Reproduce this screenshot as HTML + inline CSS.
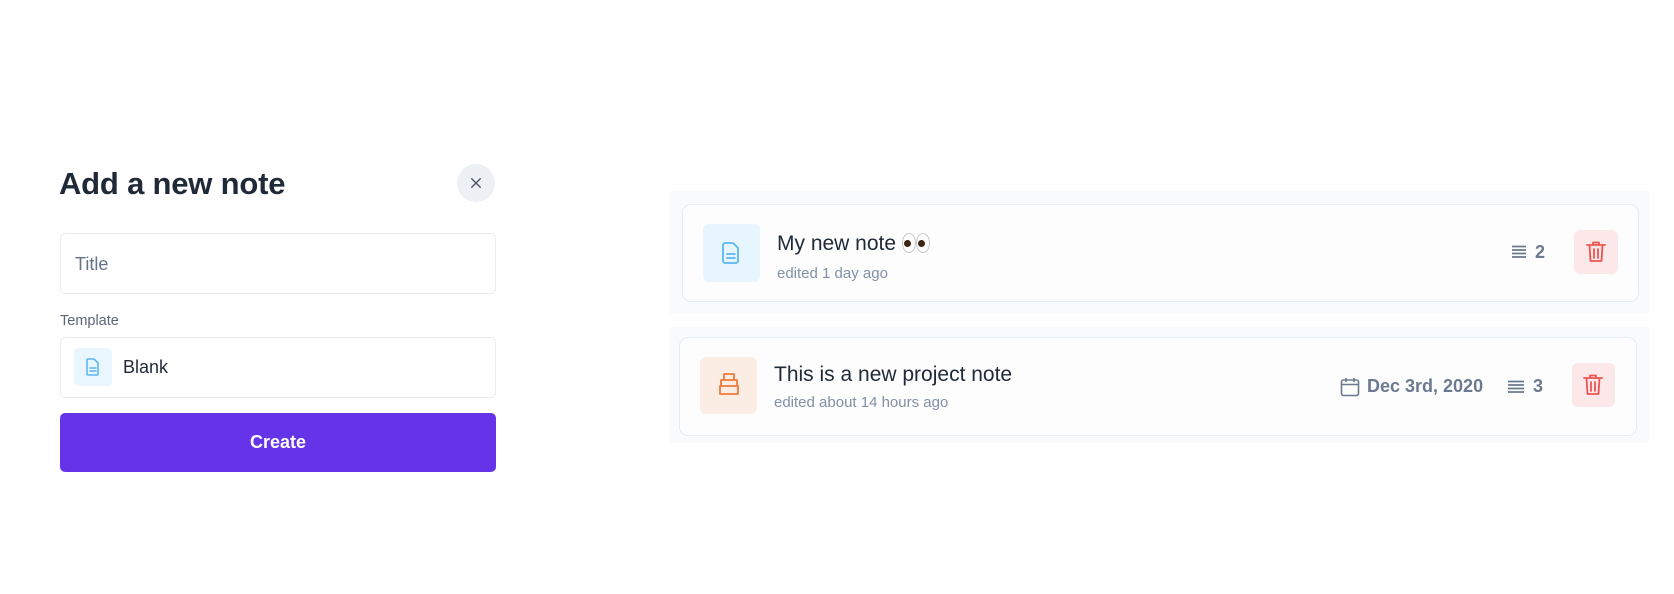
<!DOCTYPE html>
<html><head><meta charset="utf-8"><style>
*{box-sizing:border-box;margin:0;padding:0}
body{width:1674px;height:594px;background:#fff;position:relative;overflow:hidden;font-family:"Liberation Sans","Noto Sans CJK JP",sans-serif;color:#1e2633}
.a{position:absolute}
.t{white-space:nowrap}
</style></head><body>
<div class="a t" style="left:59px;top:166px;font-size:31px;font-weight:bold;color:#1f2937;letter-spacing:-0.2px">Add a new note</div>
<div class="a" style="left:457px;top:164px;width:38px;height:38px;border-radius:50%;background:#edf0f4"></div>
<svg class="a" style="left:470px;top:177px" width="12" height="12" viewBox="0 0 14 14"><path d="M2 2L12 12M12 2L2 12" stroke="#4b5563" stroke-width="1.6" stroke-linecap="round"/></svg>

<div class="a" style="left:60px;top:233px;width:436px;height:61px;border:1px solid #e8ecf1;border-radius:5px"></div>
<div class="a t" style="left:75px;top:254px;font-size:18px;color:#64748b">Title</div>
<div class="a t" style="left:60px;top:313px;font-size:14.5px;color:#5b6677">Template</div>
<div class="a" style="left:60px;top:337px;width:436px;height:61px;border:1px solid #e8ecf1;border-radius:5px"></div>
<div class="a" style="left:74px;top:348px;width:38px;height:38px;border-radius:5px;background:#eaf6fe"></div>
<svg class="a" style="left:84px;top:357px" width="18" height="20" viewBox="0 0 18 20"><path d="M4 2h6l4 4v11a1 1 0 0 1-1 1H4a1 1 0 0 1-1-1V3a1 1 0 0 1 1-1z" fill="none" stroke="#5bb7f0" stroke-width="1.6" stroke-linejoin="round"/><path d="M6 11h6M6 14h6" stroke="#5bb7f0" stroke-width="1.6" stroke-linecap="round"/></svg>
<div class="a t" style="left:123px;top:357px;font-size:18px;color:#1f2937">Blank</div>
<div class="a" style="left:60px;top:413px;width:436px;height:59px;border-radius:5px;background:#6534e8"></div>
<div class="a t" style="left:60px;top:432px;width:436px;text-align:center;font-size:18px;font-weight:bold;color:#fff">Create</div>

<div class="a" style="left:670px;top:191px;width:979px;height:123px;background:#f9fafc"></div>
<div class="a" style="left:682px;top:204px;width:957px;height:98px;border:1px solid #e6eaf1;border-radius:9px;background:#fdfdfe"></div>
<div class="a" style="left:703px;top:224px;width:57px;height:58px;border-radius:6px;background:#e6f5fe"></div>
<svg class="a" style="left:720px;top:241px" width="22" height="24" viewBox="0 0 22 24"><path d="M5 2h8l5 5v13a2 2 0 0 1-2 2H5a2 2 0 0 1-2-2V4a2 2 0 0 1 2-2z" fill="none" stroke="#5bb7f0" stroke-width="1.8" stroke-linejoin="round"/><path d="M7 13h8M7 17h8" stroke="#5bb7f0" stroke-width="1.8" stroke-linecap="round"/></svg>
<div class="a t" style="left:777px;top:232px;font-size:21px;color:#1f2937">My new note <span style="display:inline-block;width:14px;height:20px;border-radius:50%;background:#fff;border:1px solid #c9c9c9;vertical-align:-3px;position:relative"><i style="position:absolute;left:1px;top:6px;width:7px;height:7px;border-radius:50%;background:#3b2513"></i></span><span style="display:inline-block;width:14px;height:20px;border-radius:50%;background:#fff;border:1px solid #c9c9c9;vertical-align:-3px;position:relative"><i style="position:absolute;left:1px;top:6px;width:7px;height:7px;border-radius:50%;background:#3b2513"></i></span></div>
<div class="a t" style="left:777px;top:265px;font-size:15px;color:#8190a5">edited 1 day ago</div>
<svg class="a" style="left:1512px;top:245px" width="14" height="14" viewBox="0 0 14 14"><path d="M0 1.5h14M0 5h14M0 8.5h14M0 12h14" stroke="#6b7a90" stroke-width="1.8"/></svg>
<div class="a t" style="left:1535px;top:242px;font-size:18px;font-weight:bold;color:#6b7a90">2</div>
<div class="a" style="left:1574px;top:230px;width:44px;height:44px;border-radius:6px;background:#fce8e8"></div>
<svg class="a" style="left:1585px;top:240px" width="22" height="24" viewBox="0 0 22 24"><path d="M2 5h18M8 5V2.5h6V5M4.5 5l1 16h11l1-16M9 9v9M13 9v9" fill="none" stroke="#ec5454" stroke-width="1.8" stroke-linejoin="round" stroke-linecap="round"/></svg>

<div class="a" style="left:670px;top:327px;width:979px;height:116px;background:#f9fafc"></div>
<div class="a" style="left:679px;top:337px;width:958px;height:99px;border:1px solid #e6eaf1;border-radius:9px;background:#fdfdfe"></div>
<div class="a" style="left:700px;top:357px;width:57px;height:57px;border-radius:6px;background:#fbede4"></div>
<svg class="a" style="left:716px;top:372px" width="26" height="26" viewBox="0 0 26 26"><path d="M8 2h10v6H8zM5 8h16v6H5zM4 14h18v8H4z" fill="none" stroke="#ef7a3a" stroke-width="1.8" stroke-linejoin="round"/></svg>
<div class="a t" style="left:774px;top:363px;font-size:21px;color:#1f2937">This is a new project note</div>
<div class="a t" style="left:774px;top:394px;font-size:15px;color:#8190a5">edited about 14 hours ago</div>
<svg class="a" style="left:1340px;top:377px" width="20" height="20" viewBox="0 0 20 20"><rect x="1.5" y="3" width="17" height="15.5" rx="2" fill="none" stroke="#6b7a90" stroke-width="1.6"/><path d="M1.5 7.5h17M6 1v4M14 1v4" stroke="#6b7a90" stroke-width="1.6"/></svg>
<div class="a t" style="left:1367px;top:376px;font-size:18px;font-weight:bold;color:#6b7a90">Dec 3rd, 2020</div>
<svg class="a" style="left:1508px;top:380px" width="16" height="14" viewBox="0 0 16 14"><path d="M0 1.5h16M0 5h16M0 8.5h16M0 12h16" stroke="#6b7a90" stroke-width="1.8"/></svg>
<div class="a t" style="left:1533px;top:376px;font-size:18px;font-weight:bold;color:#6b7a90">3</div>
<div class="a" style="left:1572px;top:363px;width:43px;height:44px;border-radius:6px;background:#fce8e8"></div>
<svg class="a" style="left:1582px;top:373px" width="22" height="24" viewBox="0 0 22 24"><path d="M2 5h18M8 5V2.5h6V5M4.5 5l1 16h11l1-16M9 9v9M13 9v9" fill="none" stroke="#ec5454" stroke-width="1.8" stroke-linejoin="round" stroke-linecap="round"/></svg>
</body></html>
